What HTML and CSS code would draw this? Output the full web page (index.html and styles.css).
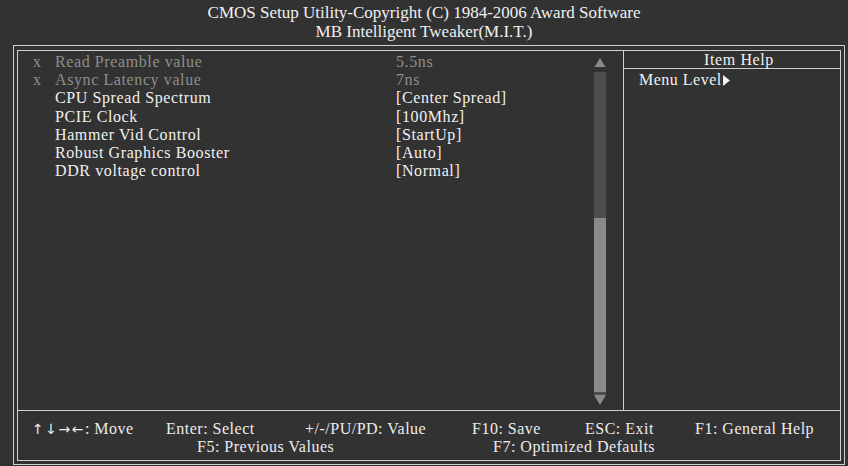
FILE: index.html
```html
<!DOCTYPE html>
<html lang="en">
<head>
    <meta charset="UTF-8">
    <title>MB Intelligent Tweaker(M.I.T.)</title>
    <link rel="stylesheet" href="styles.css">
</head>
<body>
    <!-- Title -->
    <div class="header">
        <div class="title">CMOS Setup Utility-Copyright (C) 1984-2006 Award Software</div>
        <div class="title">MB Intelligent Tweaker(M.I.T.)</div>
    </div>

    <div class="frame">
        <div class="inner">
            <div class="main">
                <!-- Settings list -->
                <div class="list">
                    <div class="rows">
                        <div class="row disabled"><span class="mark">x</span><span class="label">Read Preamble value</span><span class="value">5.5ns</span></div>
                        <div class="row disabled"><span class="mark">x</span><span class="label">Async Latency value</span><span class="value">7ns</span></div>
                        <div class="row"><span class="mark"></span><span class="label">CPU Spread Spectrum</span><span class="value">[Center Spread]</span></div>
                        <div class="row"><span class="mark"></span><span class="label">PCIE Clock</span><span class="value">[100Mhz]</span></div>
                        <div class="row"><span class="mark"></span><span class="label">Hammer Vid Control</span><span class="value">[StartUp]</span></div>
                        <div class="row"><span class="mark"></span><span class="label">Robust Graphics Booster</span><span class="value">[Auto]</span></div>
                        <div class="row"><span class="mark"></span><span class="label">DDR voltage control</span><span class="value">[Normal]</span></div>
                    </div>

                    <!-- Scroll bar -->
                    <div class="scrollbar">
                        <svg class="arrow-up" width="12" height="10" viewBox="0 0 12 10"><polygon points="6,0 12,10 0,10" fill="#8a8a8a"/></svg>
                        <div class="track">
                            <div class="thumb"></div>
                        </div>
                        <svg class="arrow-down" width="12" height="10" viewBox="0 0 12 10"><polygon points="0,0 12,0 6,10" fill="#8a8a8a"/></svg>
                    </div>
                </div>

                <!-- Item help -->
                <div class="help">
                    <div class="help-title">Item Help</div>
                    <div class="help-text">Menu Level<svg width="7" height="11" viewBox="0 0 7 11"><polygon points="0,0 7,5.5 0,11" fill="#f2f2f2"/></svg></div>
                </div>
            </div>

            <!-- Key legend -->
            <div class="footer">
                <div class="keys">
                    <span class="k1"><span class="arrows">↑↓→←</span>: Move</span>
                    <span class="k2">Enter: Select</span>
                    <span class="k3">+/-/PU/PD: Value</span>
                    <span class="k4">F10: Save</span>
                    <span class="k5">ESC: Exit</span>
                    <span>F1: General Help</span>
                </div>
                <div class="keys second">
                    <span class="k6">F5: Previous Values</span>
                    <span>F7: Optimized Defaults</span>
                </div>
            </div>
        </div>
    </div>
</body>
</html>
```

FILE: styles.css
```css
/* BIOS setup screen */
body {
    margin: 0;
    padding: 0;
    width: 848px;
    height: 466px;
    overflow: hidden;
    background-color: #323232;
    color: #f0f0f0;
    font-family: "Liberation Serif", "Times New Roman", serif;
    font-size: 16px;
}

.header {
    height: 45px;
    padding-top: 3px;
    box-sizing: border-box;
    text-align: center;
}

.title {
    font-size: 17px;
    line-height: 19px;
}

.frame {
    margin-left: 13px;
    width: 832px;
    height: 420px;
    box-sizing: border-box;
    border: 1px solid #cfcfcf;
    padding: 4px 3px 3px 3px;
}

.inner {
    height: 100%;
    box-sizing: border-box;
    border: 1px solid #cfcfcf;
    display: flex;
    flex-direction: column;
}

.main {
    display: flex;
    height: 359px;
    border-bottom: 1px solid #cfcfcf;
}

.list {
    width: 605px;
    display: flex;
    border-right: 1px solid #cfcfcf;
}

.rows {
    flex: 1;
    padding-top: 2px;
}

.row {
    display: flex;
    height: 18.2px;
    line-height: 18px;
    letter-spacing: 0.6px;
    white-space: nowrap;
}

.row.disabled {
    color: #8e8e8e;
}

.mark {
    width: 37px;
    padding-left: 15px;
    box-sizing: border-box;
}

.label {
    width: 341px;
}

.scrollbar {
    width: 12px;
    margin-right: 17px;
    padding-top: 7px;
    display: flex;
    flex-direction: column;
}

.arrow-up {
    display: block;
    height: 9px;
    margin-bottom: 5px;
}

.track {
    height: 323px;
    background-color: #4d4d4d;
    display: flex;
    flex-direction: column;
    justify-content: flex-end;
    padding-bottom: 3px;
    box-sizing: border-box;
}

.thumb {
    height: 174px;
    background-color: #8a8a8a;
}

.arrow-down {
    display: block;
}

.help {
    flex: 1;
}

.help-title {
    height: 17px;
    line-height: 18px;
    text-align: center;
    padding-left: 14px;
    letter-spacing: 0.6px;
    border-bottom: 1px solid #cfcfcf;
}

.help-text {
    padding-left: 15px;
    line-height: 21px;
    letter-spacing: 0.5px;
}

.help-text svg {
    vertical-align: -1px;
    margin-left: 1px;
}

.footer {
    flex: 1;
    padding-top: 9px;
    color: #ececec;
    letter-spacing: 0.5px;
}

.keys {
    display: flex;
    padding-left: 14px;
    line-height: 18px;
    white-space: nowrap;
}

.keys.second {
    padding-left: 179px;
}

.arrows {
    font-family: "DejaVu Sans", sans-serif;
    font-size: 14px;
    letter-spacing: 1.5px;
}

.k1 { width: 134px; }
.k2 { width: 139px; }
.k3 { width: 167px; }
.k4 { width: 113px; }
.k5 { width: 110px; }
.k6 { width: 296px; }
```
